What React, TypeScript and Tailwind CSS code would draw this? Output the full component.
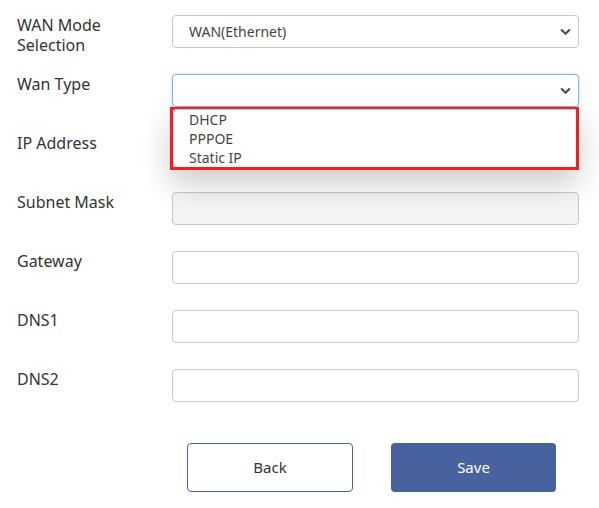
import React from 'react';

const Chevron = () => (
  <svg className="absolute right-[7px] top-1/2 -translate-y-1/2" width="11" height="7" viewBox="0 0 11 7" fill="none">
    <path d="M1.8 1.6l3.7 3.6 3.7-3.6" stroke="#555" strokeWidth="2.3" strokeLinecap="round" strokeLinejoin="round" />
  </svg>
);

const Row = ({ label, children }: { label: React.ReactNode; children?: React.ReactNode }) => (
  <div className="flex h-[33px] items-start">
    <div className="w-[155px] shrink-0 text-[16px] leading-[20px] text-[#333]">{label}</div>
    <div className="relative w-[407px]">{children}</div>
  </div>
);

const TextBox = ({ disabled = false }: { disabled?: boolean }) => (
  <div
    className={`h-[33px] w-full rounded-[4px] border border-[#c8c8c8] ${disabled ? 'bg-[#f4f4f4]' : 'bg-white'}`}
  />
);

export default function App() {
  const options = ['DHCP', 'PPPOE', 'Static IP'];

  return (
    <div className="min-h-[508px] w-[599px] bg-white pl-[17px] pt-[15px]" style={{ fontFamily: '"Noto Sans", "Open Sans", sans-serif' }}>
      <div className="flex flex-col gap-[26px]">
        <Row label={<>WAN Mode<br />Selection</>}>
          <div className="relative flex h-[33px] w-full items-center rounded-[4px] border border-[#c8c8c8] bg-white pl-[16px] text-[14px] text-[#444]">
            WAN(Ethernet)
            <Chevron />
          </div>
        </Row>

        <Row label="Wan Type">
          <div className="relative h-[33px] w-full rounded-[4px] border border-[#80b5ee] bg-white shadow-[0_0_3px_rgba(100,160,230,0.45)]">
            <Chevron />
          </div>
          <div className="absolute left-[-2px] top-[33px] z-10 h-[63px] w-[409px] border-[3px] border-[#ff1a1a] bg-white shadow-[0_14px_30px_rgba(0,0,0,0.2)]">
            <div className="mt-[-1px] rounded-tl-[4px] border-l border-t border-[#d0d0d0] pl-[15px]">
              {options.map((o) => (
                <div key={o} className="h-[19px] text-[14px] leading-[19px] text-[#444]">
                  {o}
                </div>
              ))}
            </div>
          </div>
        </Row>

        <Row label="IP Address">
          <TextBox />
        </Row>

        <Row label="Subnet Mask">
          <TextBox disabled />
        </Row>

        <Row label="Gateway">
          <TextBox />
        </Row>

        <Row label="DNS1">
          <TextBox />
        </Row>

        <Row label="DNS2">
          <TextBox />
        </Row>
      </div>

      <div className="mt-[41px] flex gap-[38px] pl-[170px]">
        <button className="h-[49px] w-[166px] rounded-[4px] border border-[#4862a0] bg-white text-[15px] text-[#333]">
          Back
        </button>
        <button className="h-[49px] w-[165px] rounded-[4px] bg-[#4862a0] text-[15px] text-white">
          Save
        </button>
      </div>
    </div>
  );
}
